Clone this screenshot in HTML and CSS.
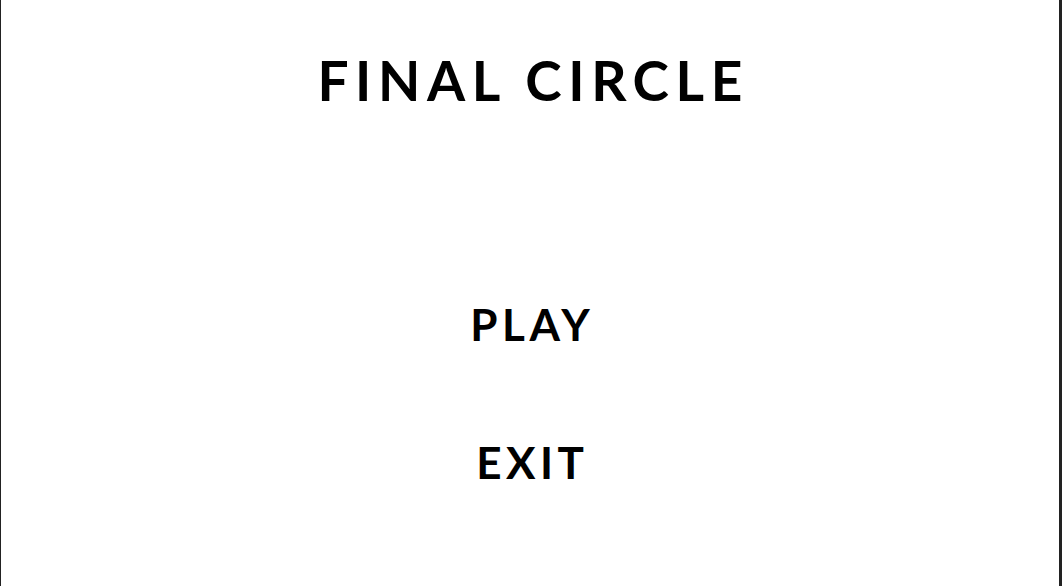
FILE: index.html
```html
<!DOCTYPE html>
<html>
<head>
<meta charset="utf-8">
<link rel="stylesheet" href="styles.css">
</head>
<body>
<div class="screen">
  <h1 class="title">FINAL CIRCLE</h1>
  <nav class="menu">
    <div class="item">PLAY</div>
    <div class="item">EXIT</div>
  </nav>
</div>
</body>
</html>
```
FILE: styles.css
```css
html, body {
  margin: 0;
  padding: 0;
  background: #fff;
}
.screen {
  box-sizing: border-box;
  width: 1062px;
  height: 586px;
  border-left: 1px solid #222;
  border-right: 3px solid #222;
  display: flex;
  flex-direction: column;
  align-items: center;
  font-family: Lato, "Liberation Sans", sans-serif;
  color: #000;
}
.title {
  margin: 48px 0 0 0;
  padding-left: 6.4px;
  font-size: 55px;
  font-weight: 700;
  letter-spacing: 6.6px;
  line-height: 64px;
}
.menu {
  margin-top: 190px;
  display: flex;
  flex-direction: column;
  align-items: center;
  gap: 94px;
}
.item {
  padding-left: 4.5px;
  font-size: 44px;
  font-weight: 700;
  letter-spacing: 4.5px;
  line-height: 44px;
}
```
